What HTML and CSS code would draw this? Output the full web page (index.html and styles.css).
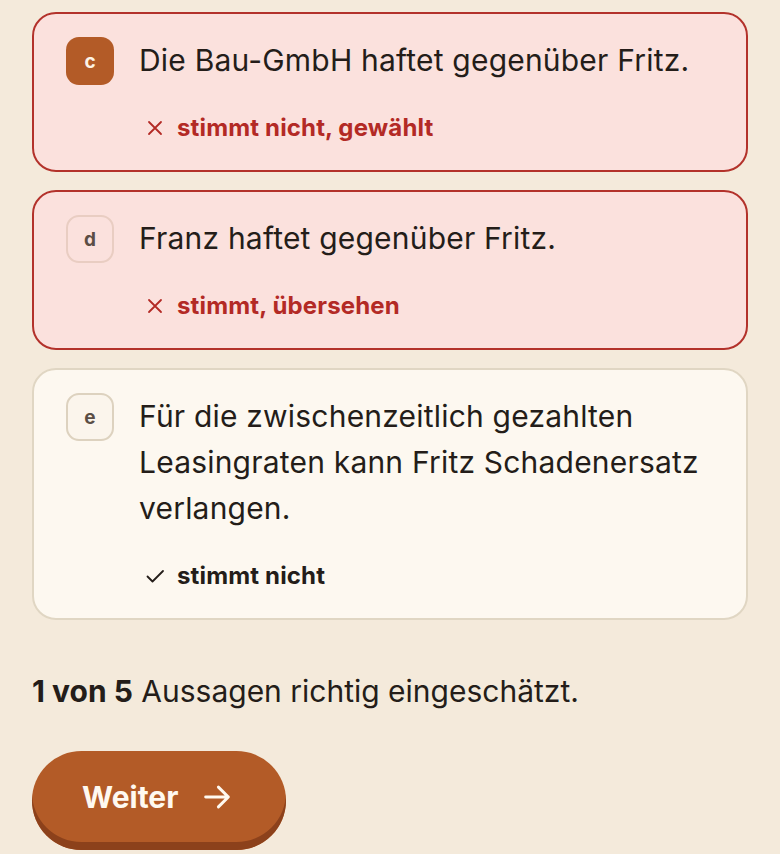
FILE: index.html
```html
<!DOCTYPE html>
<html lang="de">
<head>
<meta charset="utf-8">
<link rel="stylesheet" href="styles.css">
</head>
<body>
<main class="page">
  <div class="options">
    <div class="card card-wrong">
      <div class="row">
        <span class="badge badge-filled">c</span>
        <div class="content">
          <p class="statement">Die Bau-GmbH haftet gegenüber Fritz.</p>
          <p class="result result-wrong">
            <svg class="icon" viewBox="0 0 24 24"><path d="M6 6l12 12M18 6L6 18"/></svg>
            <span>stimmt nicht, gewählt</span>
          </p>
        </div>
      </div>
    </div>
    <div class="card card-wrong">
      <div class="row">
        <span class="badge badge-outline-red">d</span>
        <div class="content">
          <p class="statement">Franz haftet gegenüber Fritz.</p>
          <p class="result result-wrong">
            <svg class="icon" viewBox="0 0 24 24"><path d="M6 6l12 12M18 6L6 18"/></svg>
            <span>stimmt, übersehen</span>
          </p>
        </div>
      </div>
    </div>
    <div class="card card-neutral">
      <div class="row">
        <span class="badge badge-outline">e</span>
        <div class="content">
          <p class="statement">Für die zwischenzeitlich gezahlten Leasingraten kann Fritz Schadenersatz verlangen.</p>
          <p class="result result-ok">
            <svg class="icon" viewBox="0 0 24 24"><path d="M4.5 12.5l5 5L20 7"/></svg>
            <span>stimmt nicht</span>
          </p>
        </div>
      </div>
    </div>
  </div>
  <p class="summary"><strong>1 von 5</strong> Aussagen richtig eingeschätzt.</p>
  <button class="btn">
    <span>Weiter</span>
    <svg class="btn-icon" viewBox="0 0 24 24"><path d="M4 12h16M13 5l7 7-7 7"/></svg>
  </button>
</main>
</body>
</html>
```
FILE: styles.css
```css
html, body {
  margin: 0;
  padding: 0;
  background: #f4eadb;
}
body {
  font-family: "Inter", "Noto Sans", sans-serif;
  color: #241d19;
}
.page {
  padding: 12px 32px 0 32px;
  width: 716px;
}
.options {
  display: flex;
  flex-direction: column;
  gap: 18px;
}
.card {
  border-radius: 24px;
  border: 2px solid;
  padding: 23px 32px 29px 32px;
}
.card-wrong {
  background: #fbe1dd;
  border-color: #b3322b;
}
.card-neutral {
  background: #fdf8f0;
  border-color: #e0d6c3;
}
.row {
  display: flex;
  gap: 25px;
  align-items: flex-start;
}
.badge {
  flex: none;
  width: 48px;
  height: 48px;
  box-sizing: border-box;
  border-radius: 13px;
  display: flex;
  align-items: center;
  justify-content: center;
  font-size: 19px;
  font-weight: 700;
  color: #5b4e45;
}
.badge-filled {
  background: #b35b27;
  color: #fdf3e6;
}
.badge-outline-red {
  border: 2px solid #e9cdc2;
}
.badge-outline {
  border: 2px solid #ddd2bf;
  background: #fbf5ec;
}
.content {
  flex: 1;
  min-width: 0;
}
.statement {
  margin: 0;
  font-size: 30px;
  line-height: 46px;
  letter-spacing: 0.2px;
}
.result {
  margin: 32px 0 0 4px;
  display: flex;
  align-items: center;
  gap: 10px;
  font-size: 24px;
  font-weight: 700;
  line-height: 26px;
  letter-spacing: 0.15px;
}
.icon {
  width: 24px;
  height: 24px;
  fill: none;
  stroke: currentColor;
  stroke-width: 1.8;
  stroke-linecap: round;
  stroke-linejoin: round;
}
.result-wrong {
  color: #b32a25;
}
.result-ok {
  color: #241d19;
}
.summary {
  margin: 51px 0 0 0;
  font-size: 30px;
  line-height: 40px;
  color: #241d19;
}
.summary strong {
  font-weight: 700;
}
.btn {
  margin-top: 40px;
  display: flex;
  align-items: center;
  gap: 22px;
  height: 99px;
  padding: 0 52px 8px 50px;
  border: none;
  border-radius: 50px;
  background: #b35b27;
  box-shadow: inset 0 -8px 0 #8c411b;
  color: #fff9f0;
  font-family: inherit;
  font-size: 30px;
  font-weight: 700;
}
.btn-icon {
  width: 34px;
  height: 34px;
  fill: none;
  stroke: currentColor;
  stroke-width: 2.1;
  stroke-linecap: round;
  stroke-linejoin: round;
}
```
